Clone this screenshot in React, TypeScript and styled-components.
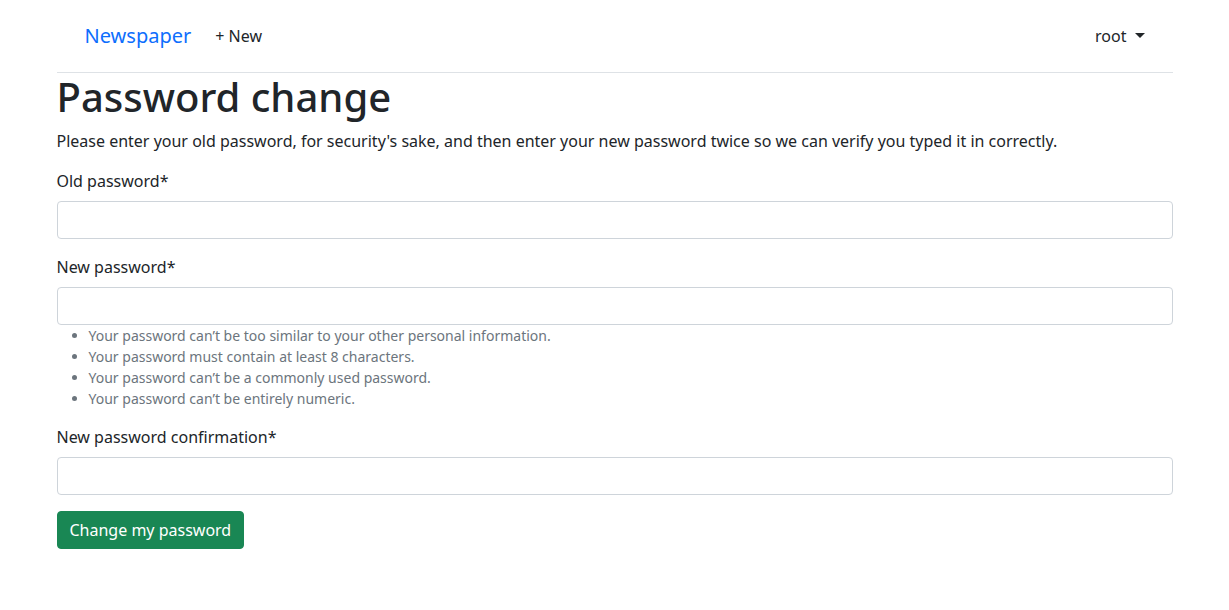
import React from 'react';
import styled, { createGlobalStyle } from 'styled-components';

const GlobalStyle = createGlobalStyle`
  *, *::before, *::after { box-sizing: border-box; }
  body {
    margin: 0;
    background: #fff;
    color: #212529;
    font-family: "Noto Sans", "Liberation Sans", sans-serif;
    font-size: 16px;
    line-height: 24px;
  }
`;

const Container = styled.div`
  max-width: 1140px;
  margin: 0 auto;
  padding: 0 12px;
`;

const Navbar = styled.nav`
  display: flex;
  align-items: center;
  padding: 16px 28px;
  border-bottom: 1px solid #dee2e6;
`;

const Brand = styled.a`
  margin-right: 16px;
  padding: 5px 0;
  font-size: 20px;
  line-height: 30px;
  color: #0d6efd;
  text-decoration: none;
`;

const NavLink = styled.a`
  padding: 8px;
  color: #212529;
  text-decoration: none;
`;

const UserMenu = styled.button`
  margin-left: auto;
  padding: 8px 0;
  border: 0;
  background: none;
  font: inherit;
  color: #212529;
`;

const Caret = styled.span`
  display: inline-block;
  margin-left: 8px;
  vertical-align: 4px;
  border-top: 5px solid;
  border-right: 5px solid transparent;
  border-left: 5px solid transparent;
`;

const Title = styled.h1`
  margin: 0 0 8px;
  font-size: 40px;
  line-height: 48px;
  font-weight: 500;
`;

const Intro = styled.p`
  margin: 0 0 16px;
`;

const Field = styled.div`
  margin-bottom: 16px;
`;

const Label = styled.label`
  display: block;
  margin-bottom: 8px;
`;

const Input = styled.input`
  display: block;
  width: 100%;
  padding: 6px 12px;
  border: 1px solid #ced4da;
  border-radius: 4px;
  background: #fff;
  font: inherit;
  color: inherit;
`;

const Hints = styled.ul`
  margin: 0;
  padding-left: 32px;
  font-size: 14px;
  line-height: 21px;
  color: #6c757d;
`;

const SubmitButton = styled.button`
  padding: 6px 12px;
  border: 1px solid #198754;
  border-radius: 4px;
  background: #198754;
  color: #fff;
  font: inherit;
`;

const hints = [
  'Your password can’t be too similar to your other personal information.',
  'Your password must contain at least 8 characters.',
  'Your password can’t be a commonly used password.',
  'Your password can’t be entirely numeric.',
];

export default function App() {
  return (
    <Container>
      <GlobalStyle />
      <Navbar>
        <Brand href="#">Newspaper</Brand>
        <NavLink href="#new">+ New</NavLink>
        <UserMenu type="button" aria-haspopup="menu">
          root
          <Caret />
        </UserMenu>
      </Navbar>
      <main>
        <Title>Password change</Title>
        <Intro>
          Please enter your old password, for security's sake, and then enter your new password
          twice so we can verify you typed it in correctly.
        </Intro>
        <form onSubmit={(event) => event.preventDefault()}>
          <Field>
            <Label htmlFor="old-password">Old password*</Label>
            <Input id="old-password" type="password" required />
          </Field>
          <Field>
            <Label htmlFor="new-password">New password*</Label>
            <Input id="new-password" type="password" required aria-describedby="password-hints" />
            <Hints id="password-hints">
              {hints.map((hint) => (
                <li key={hint}>{hint}</li>
              ))}
            </Hints>
          </Field>
          <Field>
            <Label htmlFor="confirm-password">New password confirmation*</Label>
            <Input id="confirm-password" type="password" required />
          </Field>
          <SubmitButton type="submit">Change my password</SubmitButton>
        </form>
      </main>
    </Container>
  );
}
